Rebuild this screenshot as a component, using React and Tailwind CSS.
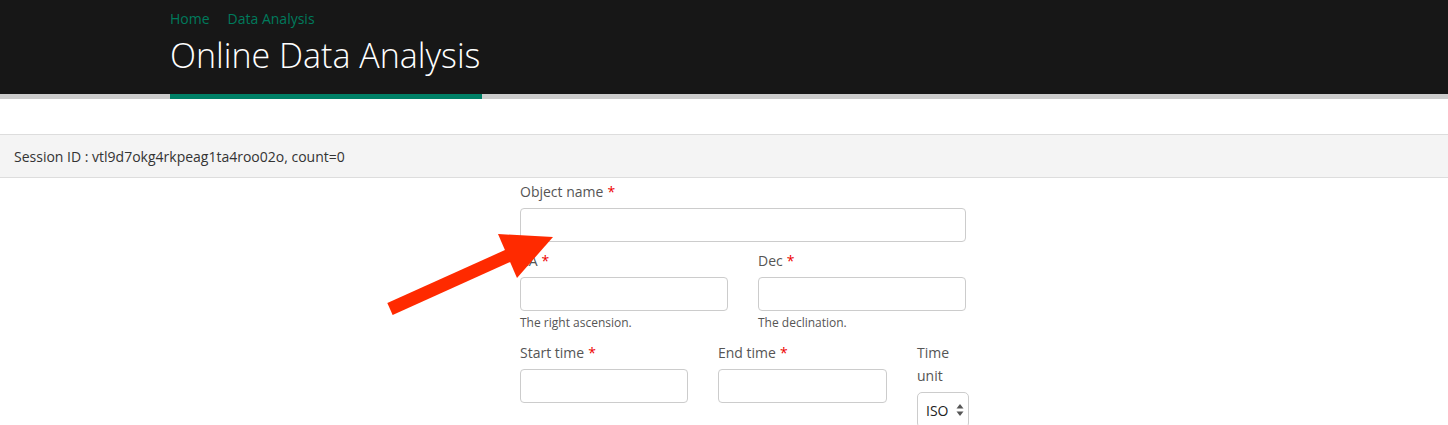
import React from 'react'

const font = { fontFamily: '"Open Sans", "Noto Sans", sans-serif' }

function Label({ children, required }) {
  return (
    <label className="block text-[14px] leading-[23px] text-[#555] mb-[5px]">
      {children}
      {required && <span className="text-[#e00] ml-1">*</span>}
    </label>
  )
}

function Input({ className = '' }) {
  return <input type="text" className={`block h-[34px] border border-[#ccc] rounded-[4px] bg-white ${className}`} />
}

function Help({ children }) {
  return <p className="text-[12px] leading-[18px] text-[#555] mt-[3px]">{children}</p>
}

export default function App(){
  return (
    <div className="relative min-h-[425px] bg-white overflow-hidden" style={font}>
      <header className="bg-[#171717] h-[94px]">
        <div className="w-[1108px] mx-auto pt-[9px]">
          <nav className="flex gap-[18px] text-[14px] leading-[20px] text-[#007a5c]">
            <a href="#">Home</a>
            <a href="#">Data Analysis</a>
          </nav>
          <h1 className="text-[34px] font-light leading-[50px] text-white mt-[1px]">Online Data Analysis</h1>
        </div>
      </header>
      <div className="bg-[#cccccc] h-[5px]">
        <div className="w-[1108px] mx-auto">
          <div className="bg-[#008066] h-[5px] w-[312px]"></div>
        </div>
      </div>

      <div className="mt-[35px] bg-[#f4f4f4] border-y border-[#dddddd] h-[44px] flex items-center px-[14px] text-[14px] text-[#333]">
        Session ID : vtl9d7okg4rkpeag1ta4roo02o, count=0
      </div>

      <form className="ml-[520px] w-[448px] pt-[2px]">
        <div>
          <Label required>Object name</Label>
          <Input className="w-[446px]" />
        </div>

        <div className="flex gap-[30px] mt-[7px]">
          <div>
            <Label required>RA</Label>
            <Input className="w-[208px]" />
            <Help>The right ascension.</Help>
          </div>
          <div>
            <Label required>Dec</Label>
            <Input className="w-[208px]" />
            <Help>The declination.</Help>
          </div>
        </div>

        <div className="flex gap-[30px] mt-[9px]">
          <div>
            <Label required>Start time</Label>
            <Input className="w-[168px]" />
          </div>
          <div>
            <Label required>End time</Label>
            <Input className="w-[169px]" />
          </div>
          <div className="w-[51px]">
            <Label>Time unit</Label>
            <div className="relative w-[52px]">
              <select className="appearance-none block w-[52px] h-[36px] border border-[#ccc] rounded-[5px] bg-white pl-[8px] text-[14px] text-[#222]">
                <option>ISO</option>
                <option>MJD</option>
              </select>
              <svg className="absolute right-[5px] top-[11px]" width="8" height="14" viewBox="0 0 8 14">
                <path d="M4 1 L7.5 5.5 H0.5 Z" fill="#555" />
                <path d="M4 13 L7.5 8.5 H0.5 Z" fill="#555" />
              </svg>
            </div>
          </div>
        </div>
      </form>

      <svg className="absolute left-0 top-0 pointer-events-none" width="1448" height="425" viewBox="0 0 1448 425">
        <line x1="390" y1="309" x2="512" y2="254" stroke="#ff2a00" strokeWidth="13" />
        <polygon points="498,234 553,237 517,278" fill="#ff2a00" />
      </svg>
    </div>
  )
}
